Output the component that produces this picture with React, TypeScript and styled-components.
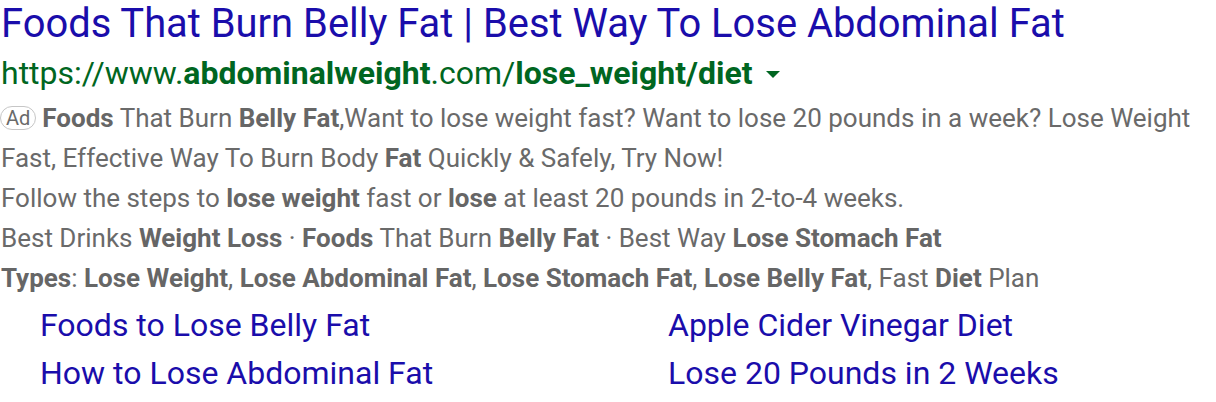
import React from "react";
import styled, { createGlobalStyle } from "styled-components";

const Global = createGlobalStyle`
  html, body { margin: 0; padding: 0; background: #fff; }
  body { font-family: Roboto, "Noto Sans", Arial, sans-serif; }
`;

const Result = styled.div`
  width: 1216px;
  padding: 0 0 0 1px;
  box-sizing: border-box;
`;

const Title = styled.a`
  display: block;
  color: #1a0dab;
  font-size: 39.9px;
  line-height: 48px;
  text-decoration: none;
  white-space: nowrap;
`;

const Url = styled.div`
  display: flex;
  align-items: center;
  color: #006621;
  font-size: 32px;
  line-height: 50px;
  white-space: nowrap;
  b { font-weight: 700; }
`;

const Caret = styled.span`
  display: inline-block;
  width: 0;
  height: 0;
  border-left: 7px solid transparent;
  border-right: 7px solid transparent;
  border-top: 7px solid #006621;
  margin-left: 14px;
  margin-top: 3px;
`;

const Desc = styled.div`
  color: #6a6a6a;
  font-size: 26px;
  line-height: 40px;
  b { font-weight: 700; color: #666; }
`;

const Line = styled.div`
  white-space: nowrap;
`;

const AdBadge = styled.span`
  display: inline-block;
  border: 1px solid #c6c6c6;
  border-radius: 13px;
  font-size: 20px;
  line-height: 22px;
  padding: 0 5px;
  margin-left: -1px;
  margin-right: 6px;
  color: #6a6a6a;
  vertical-align: 2px;
`;

const Sitelinks = styled.div`
  display: grid;
  grid-template-columns: 628px 1fr;
  padding-left: 39px;
  margin-top: 3px;
`;

const Sitelink = styled.a`
  color: #1a0dab;
  font-size: 32px;
  line-height: 48px;
  text-decoration: none;
  white-space: nowrap;
`;

export default function App() {
  return (
    <>
      <Global />
      <Result>
        <Title href="#">Foods That Burn Belly Fat | Best Way To Lose Abdominal Fat</Title>
        <Url>
          <span>
            https://www.<b>abdominalweight</b>.com/<b>lose_weight/diet</b>
          </span>
          <Caret />
        </Url>
        <Desc>
          <Line>
            <AdBadge>Ad</AdBadge>
            <b>Foods</b> That Burn <b>Belly Fat</b>,Want to lose weight fast? Want to lose 20 pounds in a week? Lose Weight
          </Line>
          <Line>
            Fast, Effective Way To Burn Body <b>Fat</b> Quickly &amp; Safely, Try Now!
          </Line>
          <Line>
            Follow the steps to <b>lose weight</b> fast or <b>lose</b> at least 20 pounds in 2-to-4 weeks.
          </Line>
          <Line>
            Best Drinks <b>Weight Loss</b> · <b>Foods</b> That Burn <b>Belly Fat</b> · Best Way <b>Lose Stomach Fat</b>
          </Line>
          <Line>
            <b>Types</b>: <b>Lose Weight</b>, <b>Lose Abdominal Fat</b>, <b>Lose Stomach Fat</b>, <b>Lose Belly Fat</b>, Fast <b>Diet</b> Plan
          </Line>
        </Desc>
        <Sitelinks>
          <Sitelink href="#">Foods to Lose Belly Fat</Sitelink>
          <Sitelink href="#">Apple Cider Vinegar Diet</Sitelink>
          <Sitelink href="#">How to Lose Abdominal Fat</Sitelink>
          <Sitelink href="#">Lose 20 Pounds in 2 Weeks</Sitelink>
        </Sitelinks>
      </Result>
    </>
  );
}
